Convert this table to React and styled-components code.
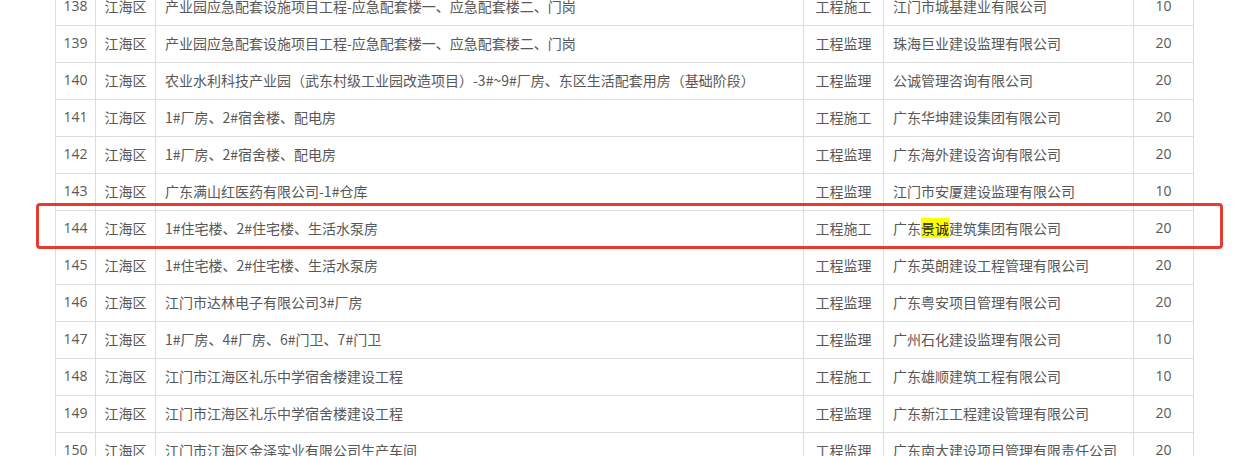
import React from "react";
import styled, { createGlobalStyle } from "styled-components";

const Global = createGlobalStyle`
  html, body { margin: 0; padding: 0; background: #fff; }
  body { font-family: "Open Sans", "Noto Sans CJK SC", sans-serif; overflow: hidden; }
`;

const Page = styled.div`
  width: 1257px;
  height: 456px;
  overflow: hidden;
  padding-left: 55px;
  box-sizing: border-box;
`;

const Frame = styled.div`
  position: relative;
  margin-top: -12px;
  width: 1139px;
`;

const Table = styled.table`
  border-collapse: collapse;
  table-layout: fixed;
  width: 1139px;
  font-size: 14px;
  color: #585858;
`;

const Col = styled.col`
  width: ${(p) => p.$w}px;
`;

const Row = styled.tr`
  height: 37px;
`;

const Cell = styled.td`
  border: 1px solid #ddd;
  line-height: 20px;
  padding: 0 0 2px ${(p) => (p.$center ? 0 : 9)}px;
  text-align: ${(p) => (p.$center ? "center" : "left")};
  vertical-align: middle;
  white-space: nowrap;
  overflow: hidden;
  font-family: "Noto Sans CJK SC", sans-serif;
`;

const NumCell = styled(Cell)`
  font-family: "Open Sans", "Noto Sans CJK SC", sans-serif;
`;

const Mark = styled.span`
  background: #ffff00;
  color: #222;
`;

const Callout = styled.div`
  position: absolute;
  left: -19px;
  top: 215px;
  width: 1187px;
  height: 46px;
  box-sizing: border-box;
  border: 3px solid #e53b33;
  border-radius: 4px;
  pointer-events: none;
`;

const widths = [40, 60, 648, 80, 250, 60];

const rows = [
  [138, "产业园应急配套设施项目工程-应急配套楼一、应急配套楼二、门岗", "工程施工", "江门市城基建业有限公司", 10],
  [139, "产业园应急配套设施项目工程-应急配套楼一、应急配套楼二、门岗", "工程监理", "珠海巨业建设监理有限公司", 20],
  [140, "农业水利科技产业园（武东村级工业园改造项目）-3#~9#厂房、东区生活配套用房（基础阶段）", "工程监理", "公诚管理咨询有限公司", 20],
  [141, "1#厂房、2#宿舍楼、配电房", "工程施工", "广东华坤建设集团有限公司", 20],
  [142, "1#厂房、2#宿舍楼、配电房", "工程监理", "广东海外建设咨询有限公司", 20],
  [143, "广东满山红医药有限公司-1#仓库", "工程监理", "江门市安厦建设监理有限公司", 10],
  [144, "1#住宅楼、2#住宅楼、生活水泵房", "工程施工", "HL", 20],
  [145, "1#住宅楼、2#住宅楼、生活水泵房", "工程监理", "广东英朗建设工程管理有限公司", 20],
  [146, "江门市达林电子有限公司3#厂房", "工程监理", "广东粤安项目管理有限公司", 20],
  [147, "1#厂房、4#厂房、6#门卫、7#门卫", "工程监理", "广州石化建设监理有限公司", 10],
  [148, "江门市江海区礼乐中学宿舍楼建设工程", "工程施工", "广东雄顺建筑工程有限公司", 10],
  [149, "江门市江海区礼乐中学宿舍楼建设工程", "工程监理", "广东新江工程建设管理有限公司", 20],
  [150, "江门市江海区金泽实业有限公司生产车间", "工程监理", "广东南大建设项目管理有限责任公司", 20],
];

export default function App() {
  return (
    <>
      <Global />
      <Page>
        <Frame>
          <Table>
            <colgroup>
              {widths.map((w, i) => (
                <Col key={i} $w={w} />
              ))}
            </colgroup>
            <tbody>
              {rows.map(([n, name, type, co, score]) => (
                <Row key={n}>
                  <NumCell $center>{n}</NumCell>
                  <Cell $center>江海区</Cell>
                  <Cell>{name}</Cell>
                  <Cell $center>{type}</Cell>
                  <Cell>
                    {co === "HL" ? (
                      <>
                        广东<Mark>景诚</Mark>建筑集团有限公司
                      </>
                    ) : (
                      co
                    )}
                  </Cell>
                  <NumCell $center>{score}</NumCell>
                </Row>
              ))}
            </tbody>
          </Table>
          <Callout />
        </Frame>
      </Page>
    </>
  );
}
